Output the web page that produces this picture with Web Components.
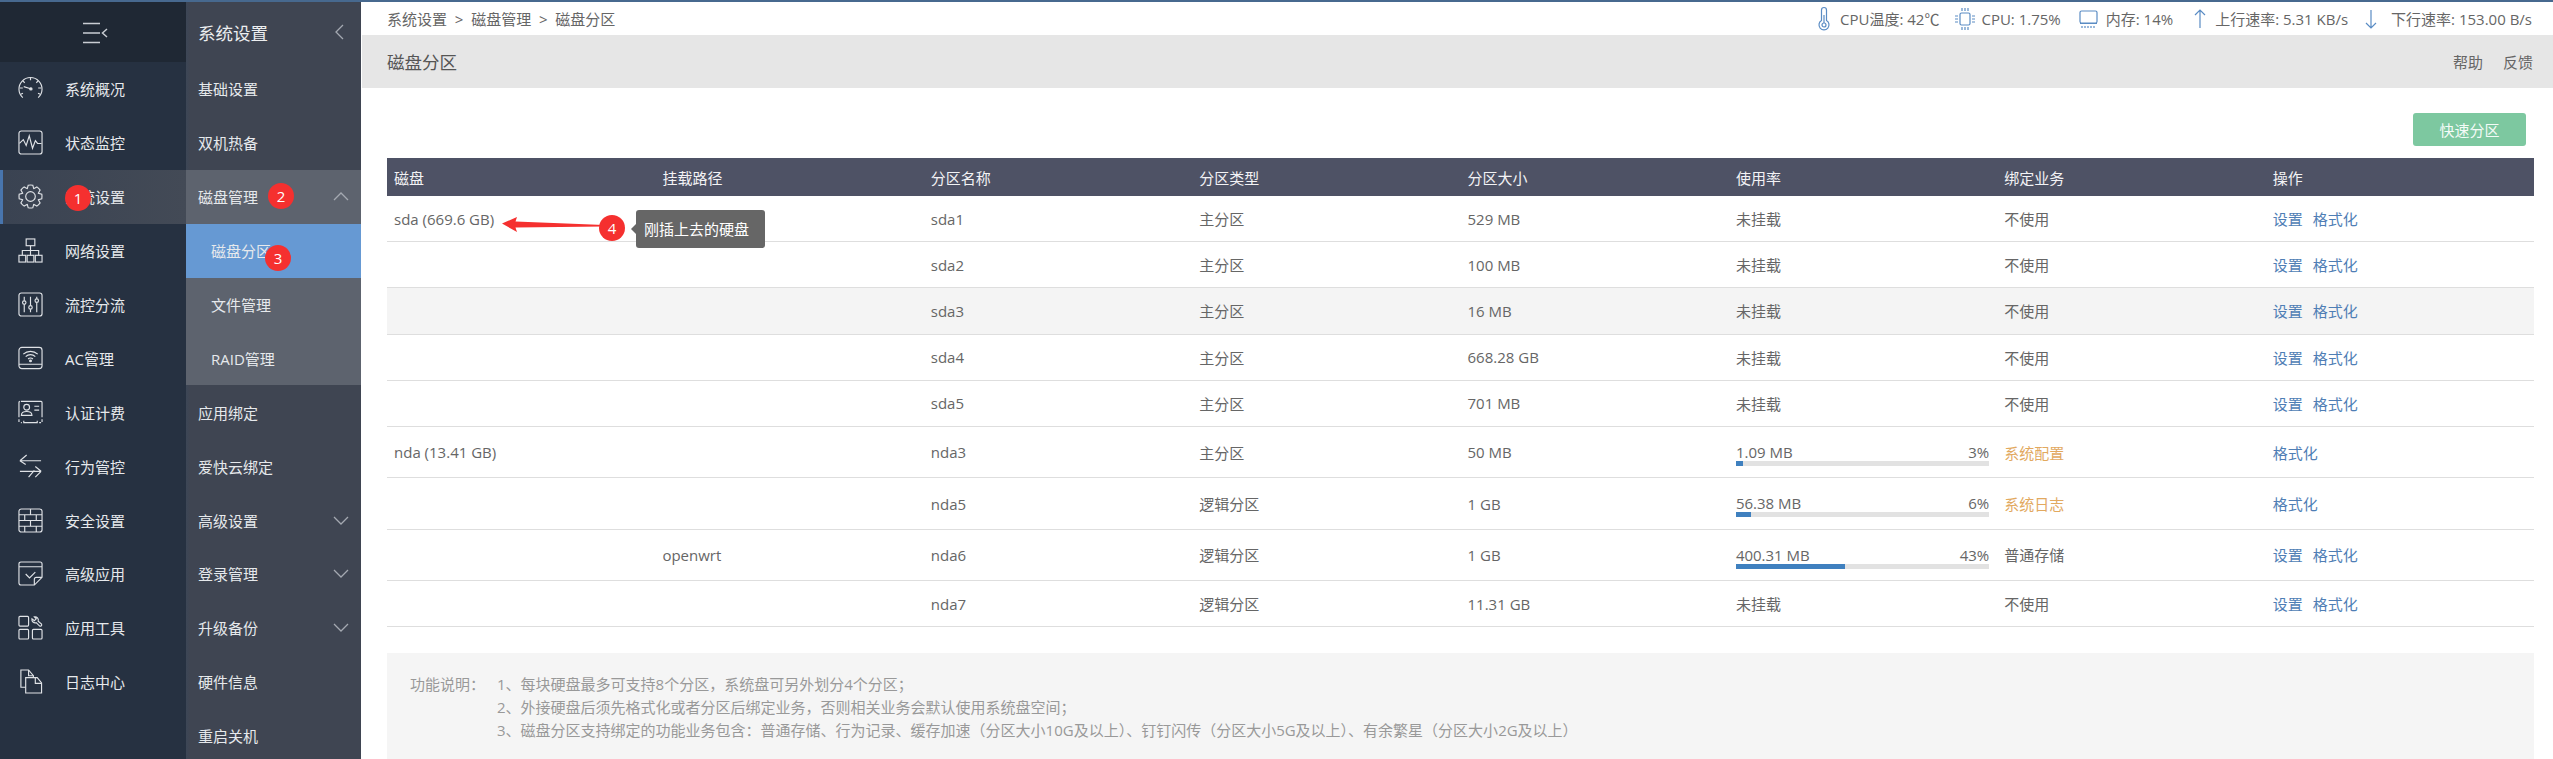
<!DOCTYPE html>
<html lang="zh"><head><meta charset="utf-8"><title>磁盘分区</title>
<style>
html,body{margin:0;height:759px;overflow:hidden;background:#fff}
body{font-family:"Open Sans","Noto Sans CJK SC",sans-serif;font-size:14px;color:#666}
x-app{--font:"Open Sans","Noto Sans CJK SC",sans-serif}
</style></head><body>
<x-app>
  <x-rail slot="rail">
    <x-rail-item icon="gauge">系统概况</x-rail-item>
    <x-rail-item icon="pulse">状态监控</x-rail-item>
    <x-rail-item icon="gear" active>系统设置</x-rail-item>
    <x-rail-item icon="net">网络设置</x-rail-item>
    <x-rail-item icon="sliders">流控分流</x-rail-item>
    <x-rail-item icon="wifi">AC管理</x-rail-item>
    <x-rail-item icon="card">认证计费</x-rail-item>
    <x-rail-item icon="swap">行为管控</x-rail-item>
    <x-rail-item icon="wall">安全设置</x-rail-item>
    <x-rail-item icon="note">高级应用</x-rail-item>
    <x-rail-item icon="tools">应用工具</x-rail-item>
    <x-rail-item icon="files">日志中心</x-rail-item>
  </x-rail>
  <x-subnav slot="subnav" heading="系统设置">
    <x-sub-item>基础设置</x-sub-item>
    <x-sub-item>双机热备</x-sub-item>
    <x-sub-item kind="open" chevron="up">磁盘管理</x-sub-item>
    <x-sub-item kind="selected">磁盘分区</x-sub-item>
    <x-sub-item kind="child">文件管理</x-sub-item>
    <x-sub-item kind="child">RAID管理</x-sub-item>
    <x-sub-item>应用绑定</x-sub-item>
    <x-sub-item>爱快云绑定</x-sub-item>
    <x-sub-item chevron="down">高级设置</x-sub-item>
    <x-sub-item chevron="down">登录管理</x-sub-item>
    <x-sub-item chevron="down">升级备份</x-sub-item>
    <x-sub-item>硬件信息</x-sub-item>
    <x-sub-item>重启关机</x-sub-item>
  </x-subnav>
  <x-main slot="main">
    <x-topbar>
      <x-crumbs>系统设置 &nbsp;&gt;&nbsp; 磁盘管理 &nbsp;&gt;&nbsp; 磁盘分区</x-crumbs>
      <x-stat icon="thermo" slot="stats" style="--g:10px">CPU温度: 42℃</x-stat>
      <x-stat icon="chip" slot="stats" style="--g:5px;--m:15px">CPU: 1.75%</x-stat>
      <x-stat icon="mem" slot="stats" style="--m:18px">内存: 14%</x-stat>
      <x-stat icon="up" slot="stats" style="--m:21px;--g:9px">上行速率: 5.31 KB/s</x-stat>
      <x-stat icon="down" slot="stats" style="--m:17px;--g:14px">下行速率: 153.00 B/s</x-stat>
    </x-topbar>
    <x-titlebar heading="磁盘分区"></x-titlebar>
    <x-toolbar><x-button>快速分区</x-button></x-toolbar>
    <x-table>
      <x-row head><x-cell>磁盘</x-cell><x-cell>挂载路径</x-cell><x-cell>分区名称</x-cell><x-cell>分区类型</x-cell><x-cell>分区大小</x-cell><x-cell>使用率</x-cell><x-cell>绑定业务</x-cell><x-cell>操作</x-cell></x-row>
      <x-row><x-cell>sda (669.6 GB)</x-cell><x-cell></x-cell><x-cell>sda1</x-cell><x-cell>主分区</x-cell><x-cell>529 MB</x-cell><x-cell>未挂载</x-cell><x-cell>不使用</x-cell><x-cell><x-actions set></x-actions></x-cell></x-row>
      <x-row><x-cell></x-cell><x-cell></x-cell><x-cell>sda2</x-cell><x-cell>主分区</x-cell><x-cell>100 MB</x-cell><x-cell>未挂载</x-cell><x-cell>不使用</x-cell><x-cell><x-actions set></x-actions></x-cell></x-row>
      <x-row stripe><x-cell></x-cell><x-cell></x-cell><x-cell>sda3</x-cell><x-cell>主分区</x-cell><x-cell>16 MB</x-cell><x-cell>未挂载</x-cell><x-cell>不使用</x-cell><x-cell><x-actions set></x-actions></x-cell></x-row>
      <x-row><x-cell></x-cell><x-cell></x-cell><x-cell>sda4</x-cell><x-cell>主分区</x-cell><x-cell>668.28 GB</x-cell><x-cell>未挂载</x-cell><x-cell>不使用</x-cell><x-cell><x-actions set></x-actions></x-cell></x-row>
      <x-row><x-cell></x-cell><x-cell></x-cell><x-cell>sda5</x-cell><x-cell>主分区</x-cell><x-cell>701 MB</x-cell><x-cell>未挂载</x-cell><x-cell>不使用</x-cell><x-cell><x-actions set></x-actions></x-cell></x-row>
      <x-row tall><x-cell>nda (13.41 GB)</x-cell><x-cell></x-cell><x-cell>nda3</x-cell><x-cell>主分区</x-cell><x-cell>50 MB</x-cell><x-cell top><x-usage used="1.09 MB" pct="3"></x-usage></x-cell><x-cell warn>系统配置</x-cell><x-cell><x-actions></x-actions></x-cell></x-row>
      <x-row tall><x-cell></x-cell><x-cell></x-cell><x-cell>nda5</x-cell><x-cell>逻辑分区</x-cell><x-cell>1 GB</x-cell><x-cell top><x-usage used="56.38 MB" pct="6"></x-usage></x-cell><x-cell warn>系统日志</x-cell><x-cell><x-actions></x-actions></x-cell></x-row>
      <x-row tall><x-cell></x-cell><x-cell>openwrt</x-cell><x-cell>nda6</x-cell><x-cell>逻辑分区</x-cell><x-cell>1 GB</x-cell><x-cell top><x-usage used="400.31 MB" pct="43"></x-usage></x-cell><x-cell>普通存储</x-cell><x-cell><x-actions set></x-actions></x-cell></x-row>
      <x-row><x-cell></x-cell><x-cell></x-cell><x-cell>nda7</x-cell><x-cell>逻辑分区</x-cell><x-cell>11.31 GB</x-cell><x-cell>未挂载</x-cell><x-cell>不使用</x-cell><x-cell><x-actions set></x-actions></x-cell></x-row>
    </x-table>
    <x-note label="功能说明：">
      <div>1、每块硬盘最多可支持8个分区，系统盘可另外划分4个分区；</div>
      <div>2、外接硬盘后须先格式化或者分区后绑定业务，否则相关业务会默认使用系统盘空间；</div>
      <div>3、磁盘分区支持绑定的功能业务包含：普通存储、行为记录、缓存加速（分区大小10G及以上）、钉钉闪传（分区大小5G及以上）、有余繁星（分区大小2G及以上）</div>
    </x-note>
  </x-main>
  <x-badge slot="overlay" style="left:65px;top:185px">1</x-badge>
  <x-badge slot="overlay" style="left:268px;top:183px">2</x-badge>
  <x-badge slot="overlay" style="left:265px;top:245px">3</x-badge>
  <x-arrow slot="overlay" style="left:500px;top:215px"></x-arrow>
  <x-badge slot="overlay" style="left:599px;top:215px">4</x-badge>
  <x-tip slot="overlay" style="left:636px;top:210px">刚插上去的硬盘</x-tip>
  <x-edge slot="overlay" style="right:0;top:326px"></x-edge>
</x-app>
<script>
const gear=(()=>{const c=13,n=8;let d='';for(let i=0;i<n;i++){const a=i*2*Math.PI/n-Math.PI/2,w=.2,s=.39;
const P=(r,t)=>(c+r*Math.cos(t)).toFixed(2)+' '+(c+r*Math.sin(t)).toFixed(2);
d+=(i?'L':'M')+P(8.8,a-s)+'L'+P(12,a-w)+'A12 12 0 0 1 '+P(12,a+w)+'L'+P(8.8,a+s)+'A8.8 8.8 0 0 1 '+P(8.8,a+2*Math.PI/n-s);}
return d+'Z';})();
const ICONS={
gauge:`<path d="M5 22.5A12 12 0 1 1 21 22.5"/><path d="M13 1.5v3M2 12.5h3M21 12.5h3M5 5l2 2M21 5l-2 2M2.8 19l2.4-1M23.2 19l-2.4-1"/><path d="M6 11l7 2.2"/><circle cx="13.4" cy="13.4" r="1.2" fill="currentColor"/>`,
pulse:`<rect x="1" y="1" width="24" height="24" rx="2.5"/><path d="M1.5 14l4-4 3 6 3.2-10 3.4 13 3-8 2.2 3H24.5"/>`,
gear:`<path d="${gear}"/><circle cx="13" cy="13" r="5"/>`,
net:`<rect x="8.5" y="1" width="9" height="7"/><path d="M13 8v5M4.5 18v-5h17v5M13 13v5"/><rect x="1" y="18" width="7" height="7"/><rect x="9.5" y="18" width="7" height="7"/><rect x="18" y="18" width="7" height="7"/>`,
sliders:`<rect x="1" y="1" width="24" height="24" rx="2.5"/><path d="M6.5 5v4M6.5 13v8M13 5v9M13 18v3M19.5 5v2M19.5 11v10"/><circle cx="6.5" cy="11" r="1.8"/><circle cx="13" cy="16" r="1.8"/><circle cx="19.5" cy="9" r="1.8"/>`,
wifi:`<rect x="1" y="1.5" width="24" height="22" rx="3"/><path d="M1 19h24M5.5 8.5a11 11 0 0 1 15 0M8 11a7.2 7.2 0 0 1 10 0M10.5 13.5a3.5 3.5 0 0 1 5 0"/><circle cx="13" cy="15.5" r=".9" fill="currentColor"/>`,
card:`<path d="M3 1.5h21a1 1 0 0 1 1 1V18M1 18V2.5a1 1 0 0 1 1-1M1 20v3M25 20v3M3 23.5h1M6 21.5v2h14v-2M22 23.5h2"/><circle cx="9" cy="7.5" r="3"/><path d="M3.5 16c0-3 2-4 5.5-4s5.500 1 5.500 4zM17 6.500h5M17 10.500h5"/>`,
swap:`<path d="M2 7h22M2 7l7-6M2 7l6 4"/><path d="M2 18h22M24 18l-6-5M24 18l-6 6M11 24l6-7"/>`,
wall:`<rect x="1" y="1" width="24" height="24" rx="2.500"/><path d="M1 7h24M1 13h24M1 19h24M13 1v6M7 7v6M19 7v6M13 13v6M7 19v6M19 19v6"/>`,
note:`<path d="M17 25H3a2 2 0 0 1-2-2V3a2 2 0 0 1 2-2h20a2 2 0 0 1 2 2v14zM17 25v-6a2 2 0 0 1 2-2h6M1 6h24"/><path d="M8 13.500l4 4 6-6"/>`,
tools:`<rect x="1" y="1.500" width="10" height="10" rx="1"/><rect x="1" y="15" width="10" height="10" rx="1"/><rect x="15" y="15" width="10" height="10" rx="1"/><path d="M17 2a3.500 3.500 0 0 1 4 4.500l3.500 3a1.500 1.500 0 0 1-2 2l-3.500-3.500a3.500 3.500 0 0 1-4.500-4l2.500 2 2-2z"/>`,
files:`<path d="M8 19H3V1h8l5 6v2"/><path d="M11 1v6h5"/><path d="M8 9h12l4.500 5.500V25H8z" /><path d="M18 9v6h6.500"/>`
};
const STATS={
thermo:`<svg width="12" height="26" viewBox="0 0 12 26"><path d="M3.500 14.500V4a2.500 2.500 0 0 1 5 0v10.500a5 5 0 1 1-5 0z"/><circle cx="6" cy="19" r="2"/><path d="M6 17V9"/></svg>`,
chip:`<svg width="22" height="24" viewBox="0 0 22 24"><rect x="6" y="6" width="10" height="12" rx="1.500"/><path d="M8 1v3M11 1v3M14 1v3M8 20v3M11 20v3M14 20v3M1 9h3M1 12h3M1 15h3M18 9h3M18 12h3M18 15h3"/></svg>`,
mem:`<svg width="19" height="22" viewBox="0 0 19 22"><rect x="1" y="3" width="17" height="12" rx="1.500"/><path d="M1 15.500h17M3 18v2M6 18v2M9 18v2M12 18v2M15 18v2"/></svg>`,
up:`<svg width="12" height="22" viewBox="0 0 12 22"><path d="M6 20V2M1 7l5-5 5 5"/></svg>`,
down:`<svg width="12" height="22" viewBox="0 0 12 22"><path d="M6 2v18M1 15l5 5 5-5"/></svg>`
};
function def(name,css,html,init){
  customElements.define(name,class extends HTMLElement{
    connectedCallback(){
      if(this.shadowRoot)return;
      const r=this.attachShadow({mode:'open'});
      r.innerHTML=`<style>${css}</style>`+(typeof html==='function'?html(this):html);
      if(init)init(this,r);
    }
  });
}
def('x-app',`:host{display:flex;position:relative;width:2553px;height:759px;overflow:hidden;font-family:var(--font);border-top:2px solid #47698f;box-sizing:border-box}
.ov{position:absolute;left:0;top:-2px;width:0;height:0}`,
`<slot name="rail"></slot><slot name="subnav"></slot><slot name="main"></slot><div class="ov"><slot name="overlay"></slot></div>`);
const burger=`<svg width="30" height="24" viewBox="0 0 30 24" fill="none" stroke="#c9cdd3" stroke-width="1.500"><path d="M1 2.500h17M1 12h17M1 21.500h17"/><path d="M25 8l-4.500 4 4.500 4"/></svg>`;
def('x-rail',`:host{display:block;width:186px;flex:none;background:#263141;color:#e8ebee}
.h{height:60px;background:#1f2834;display:flex;align-items:center;justify-content:center;padding-right:0}
svg{display:block;margin-left:8px;margin-top:1px}`,`<div class="h">${burger}</div><slot></slot>`);
def('x-rail-item',`:host{display:flex;align-items:center;height:53.9px;padding-left:18px;gap:22px;box-sizing:border-box;font-size:15px;color:#e6e9ec;border-left:0 solid #4875ad}
:host([active]){background:linear-gradient(90deg,#3a4352,#434a56);border-left-width:3px;padding-left:15px}
svg{display:block;flex:none;fill:none;stroke:#dfe2e6;stroke-width:1.200;color:#dfe2e6;width:25px;height:25px}`,
h=>`<svg viewBox="0 0 26 26">${ICONS[h.getAttribute('icon')]}</svg><slot></slot>`);
def('x-subnav',`:host{display:block;width:175px;flex:none;background:linear-gradient(90deg,#3c4656,#3f4552 4px);color:#eceef0}
.h{height:60px;display:flex;align-items:center;justify-content:space-between;padding:0 17px 0 12px;font-size:17.500px;color:#eceef0}
svg{display:block;fill:none;stroke:#a4a9b1;stroke-width:1.300}`,
h=>`<div class="h"><span>${h.getAttribute('heading')}</span><svg width="9" height="16" viewBox="0 0 9 16"><path d="M8 1L1 8l7 7"/></svg></div><slot></slot>`);
def('x-sub-item',`:host{display:flex;align-items:center;justify-content:space-between;height:53.9px;box-sizing:border-box;padding:0 12px 0 12px;font-size:15px;color:#e6e9ec}
:host([kind=open]){background:#5d636e}
:host([kind=selected]){background:#6699d3;padding-left:25px}
:host([kind=child]){background:#5d636e;padding-left:25px}
svg{display:block;fill:none;stroke:#a4a9b1;stroke-width:1.300}`,
h=>{const c=h.getAttribute('chevron');const p=c==='up'?'M1 9l7-7 7 7':'M1 2l7 7 7-7';return `<slot></slot>`+(c?`<svg width="16" height="11" viewBox="0 0 16 11"><path d="${p}"/></svg>`:'');});
def('x-main',`:host{display:block;flex:1;min-width:0;margin-left:1px;background:#fff}`,`<slot></slot>`);
def('x-topbar',`:host{display:flex;align-items:center;justify-content:space-between;height:33px;padding:0 21px 0 25px;box-sizing:border-box;font-size:15px;color:#666}
.s{display:flex;align-items:center}`,`<slot></slot><div class="s"><slot name="stats"></slot></div>`);
def('x-crumbs',`:host{display:block;font-size:15px;color:#666}`,`<slot></slot>`);
def('x-stat',`:host{display:flex;align-items:center;gap:var(--g,8px);margin-left:var(--m,18px);font-size:15px;color:#666;white-space:nowrap}
svg{display:block;fill:none;stroke:#5a8cc4;stroke-width:1.200}`,h=>STATS[h.getAttribute('icon')]+`<slot></slot>`);
def('x-titlebar',`:host{display:flex;align-items:center;justify-content:space-between;height:53px;padding:0 20px 0 25px;background:#e6e6e6;font-size:17.500px;color:#555}
.a{display:flex;gap:20px;font-size:15px;color:#666}`,h=>`<span>${h.getAttribute('heading')}</span><div class="a"><span>帮助</span><span>反馈</span></div>`);
def('x-toolbar',`:host{display:flex;justify-content:flex-end;padding:25px 27px 12px 0}`,`<slot></slot>`);
def('x-button',`:host{display:flex;align-items:center;justify-content:center;width:113px;height:33px;background:#7dc8a0;border-radius:3px;color:#f4fbf7;font-size:15px}`,`<slot></slot>`);
def('x-table',`:host{display:block;margin:0 19px 0 25px}`,`<slot></slot>`);
def('x-row',`:host{display:grid;grid-template-columns:repeat(8,1fr);align-items:center;height:46.200px;box-sizing:border-box;border-bottom:1px solid #dedede;font-size:15px;color:#666;background:#fff}
:host([tall]){height:51.400px}
:host([stripe]){background:#f4f4f4}
:host([head]){height:38px;background:#4e5265;color:#f3f3f5;border-bottom:0}`,`<slot></slot>`);
def('x-cell',`:host{display:block;padding:0 8px 0 7px;white-space:nowrap;min-width:0}
:host([warn]){color:#e2a95f}
:host([top]){align-self:start}`,`<slot></slot>`);
def('x-actions',`:host{display:flex;gap:10px;color:#4f7eb5}`,h=>(h.hasAttribute('set')?'<span>设置</span>':'')+'<span>格式化</span>');
def('x-usage',`:host{display:block;padding-top:15px}
.t{display:flex;justify-content:space-between;line-height:20px}
.b{height:5px;background:#e2e2e2;margin-top:-1px}.f{height:5px;background:#3f80bf}`,
h=>`<div class="t"><span>${h.getAttribute('used')}</span><span>${h.getAttribute('pct')}%</span></div><div class="b"><div class="f" style="width:${h.getAttribute('pct')}%"></div></div>`);
def('x-note',`:host{display:flex;margin:26px 19px 0 25px;padding:20px 0 40px 23px;background:#f5f5f5;color:#999;font-size:15px;line-height:23px;height:120px;box-sizing:border-box}
.l{width:87px;flex:none}`,h=>`<div class="l">${h.getAttribute('label')}</div><div><slot></slot></div>`);
def('x-badge',`:host{position:absolute;display:flex;align-items:center;justify-content:center;width:26px;height:26px;border-radius:50%;background:#f5302f;color:#fff;font-size:15px;line-height:1}`,`<slot></slot>`);
def('x-tip',`:host{position:absolute;display:flex;align-items:center;box-sizing:border-box;padding:0 0 2px 8px;width:129px;height:38px;background:#666;border-radius:3px;color:#fff;font-size:15px;white-space:nowrap}
i{position:absolute;left:-5px;top:14px;width:0;height:0;border:5px solid transparent;border-left:0;border-right:5px solid #666}`,`<i></i><slot></slot>`);
def('x-arrow',`:host{position:absolute;display:block;width:104px;height:20px}
svg{display:block}`,`<svg width="104" height="20" viewBox="0 0 104 20"><path d="M2 8.500L17 2l-1.500 4.500L104 10v1.500L15.500 12.500l1.500 4.500z" fill="#f5302f"/></svg>`);
def('x-edge',`:host{position:absolute;display:block;width:13px;height:52px;background:#444;border-radius:4px 0 0 4px;border:0}
div{margin:7px 3px;height:38px;background:repeating-linear-gradient(#444 0 2px,#777 2px 3px)}`,`<div></div>`);
</script>
</body></html>
